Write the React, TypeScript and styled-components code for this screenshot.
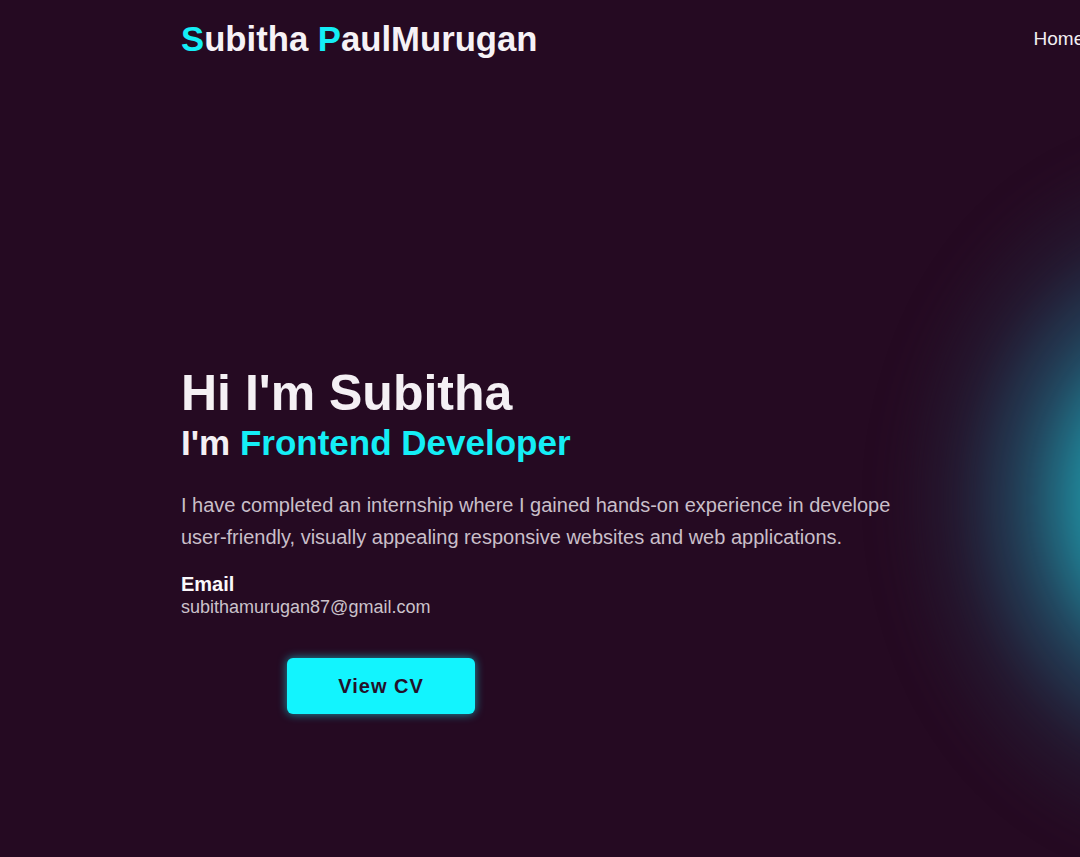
import * as React from 'react';
import styled, { createGlobalStyle } from 'styled-components';

const GlobalStyle = createGlobalStyle`
  html, body {
    margin: 0;
    padding: 0;
    background: #250a22;
    overflow: hidden;
  }
  body {
    font-family: "Liberation Sans", Arial, sans-serif;
    color: #f4f0f4;
  }
`;

const Page = styled.div`
  position: relative;
  width: 1080px;
  height: 857px;
  overflow: hidden;
  background: #250a22;
`;

// decorative blurred blob on the right edge
const Glow = styled.div`
  position: absolute;
  left: 890px;
  top: 140px;
  width: 600px;
  height: 720px;
  border-radius: 50%;
  background: radial-gradient(
    closest-side,
    rgba(32, 190, 205, 1) 0%,
    rgba(31, 150, 168, 0.95) 33%,
    rgba(33, 90, 115, 0.7) 55%,
    rgba(35, 40, 62, 0.45) 78%,
    rgba(37, 10, 34, 0) 100%
  );
  filter: blur(18px);
`;

const Header = styled.header`
  position: relative;
  display: flex;
  align-items: center;
  height: 78px;
  padding-left: 181px;
  gap: 496px;
`;

const Logo = styled.div`
  flex-shrink: 0;
  font-size: 34.7px;
  font-weight: 700;
  color: #f6f2f6;
  white-space: nowrap;
`;

const Accent = styled.span`
  color: #14eef6;
`;

const Nav = styled.nav`
  display: flex;
  flex-shrink: 0;
  gap: 32px;
`;

const NavLink = styled.a`
  font-size: 19px;
  color: #f2eef2;
  text-decoration: none;
`;

const Hero = styled.section`
  position: relative;
  padding: 289px 0 0 181px;
`;

const Title = styled.h1`
  margin: 0;
  font-size: 50px;
  font-weight: 700;
  line-height: 52px;
  color: #f4f0f4;
`;

const Subtitle = styled.h2`
  margin: 4px 0 0;
  font-size: 35px;
  font-weight: 700;
  line-height: 40px;
  color: #f4f0f4;
`;

const Intro = styled.p`
  margin: 26px 0 0;
  max-width: 720px;
  font-size: 20px;
  line-height: 32px;
  color: #c9bfc9;
`;

const Label = styled.div`
  margin-top: 20px;
  font-size: 20px;
  font-weight: 700;
  color: #fbf8fb;
`;

const Mail = styled.div`
  margin-top: 1px;
  font-size: 18px;
  color: #cbc2cb;
`;

const CvButton = styled.button`
  margin: 40px 0 0 106px;
  width: 188px;
  height: 56px;
  border: none;
  border-radius: 6px;
  background: #12f4fe;
  box-shadow: 0 0 10px rgba(18, 244, 254, 0.6);
  font-family: "Liberation Sans", Arial, sans-serif;
  font-size: 20px;
  font-weight: 700;
  letter-spacing: 1px;
  color: #24102a;
  cursor: pointer;
`;

export default function App(): JSX.Element {
  return (
    <Page>
      <GlobalStyle />
      <Glow />
      <Header>
        <Logo>
          <Accent>S</Accent>ubitha <Accent>P</Accent>aulMurugan
        </Logo>
        <Nav>
          <NavLink href="#">Home</NavLink>
          <NavLink href="#">About</NavLink>
          <NavLink href="#">Skills</NavLink>
          <NavLink href="#">Projects</NavLink>
          <NavLink href="#">Contact</NavLink>
        </Nav>
      </Header>
      <Hero>
        <Title>Hi I'm Subitha</Title>
        <Subtitle>
          I'm <Accent>Frontend Developer</Accent>
        </Subtitle>
        <Intro>
          I have completed an internship where I gained hands-on experience in develope
          user-friendly, visually appealing responsive websites and web applications.
        </Intro>
        <Label>Email</Label>
        <Mail>subithamurugan87@gmail.com</Mail>
        <CvButton>View CV</CvButton>
      </Hero>
    </Page>
  );
}
